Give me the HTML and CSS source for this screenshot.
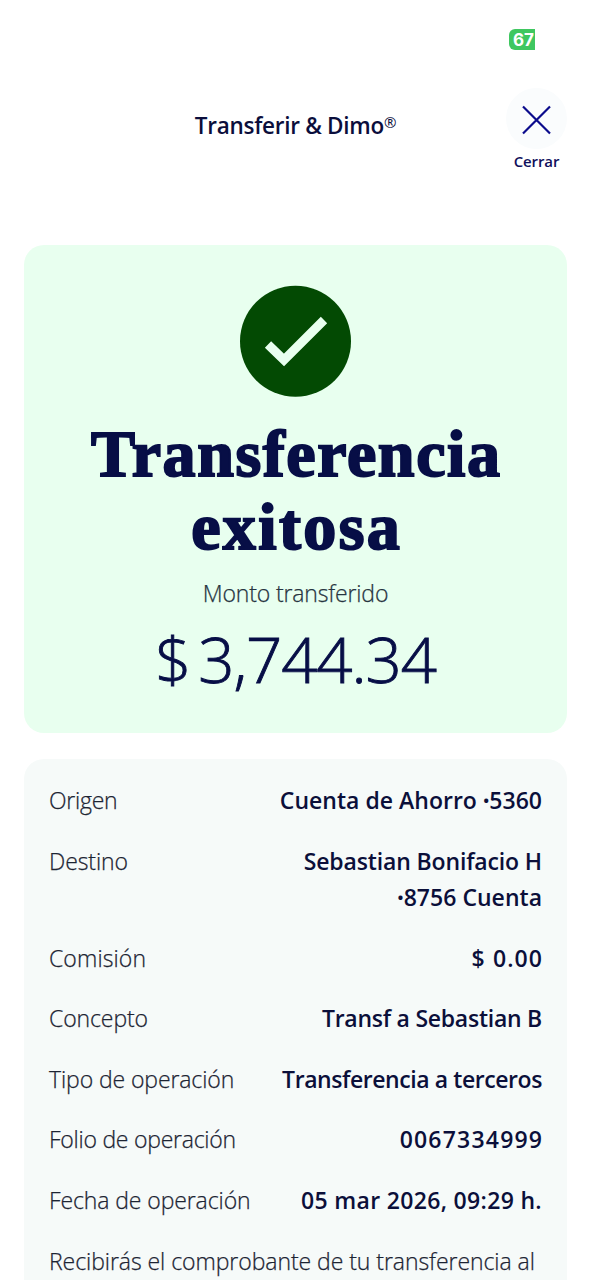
FILE: index.html
```html
<!DOCTYPE html>
<html lang="es">
<head>
<meta charset="utf-8">
<title>Transferir &amp; Dimo</title>
<link rel="stylesheet" href="styles.css">
</head>
<body>
<div class="screen">
  <div class="status"><span class="battery">67</span></div>
  <header class="header">
    <h1 class="header-title">Transferir &amp; Dimo<span class="reg">®</span></h1>
    <div class="close">
      <span class="close-circle"><svg width="30" height="30" viewBox="0 0 30 30"><path d="M1 1.5 28 28.5M28 1.5 1 28.5" fill="none" stroke="#0b0b8c" stroke-width="2.2"/></svg></span>
      <span class="close-label">Cerrar</span>
    </div>
  </header>
  <section class="summary">
    <svg class="check" width="112" height="112" viewBox="0 0 112 112"><circle cx="55.5" cy="56.2" r="55.5" fill="#034a03"/><path d="M28 59.5 44 75 84 35" fill="none" stroke="#e8ffef" stroke-width="9"/></svg>
    <h2 class="result"><span class="result-a">Transferencia</span><span class="result-b">exitosa</span></h2>
    <p class="caption">Monto transferido</p>
    <p class="amount"><span class="currency">$</span>3,744.34</p>
  </section>
  <section class="details">
    <div class="row"><span class="k k1">Origen</span><span class="v v1">Cuenta de Ahorro <span class="dot">•</span>5360</span></div>
    <div class="row"><span class="k k2">Destino</span><span class="v"><span class="v2">Sebastian Bonifacio H</span><br><span class="v3"><span class="dot">•</span>8756 Cuenta</span></span></div>
    <div class="row"><span class="k k3">Comisión</span><span class="v v4">$ 0.00</span></div>
    <div class="row"><span class="k k4">Concepto</span><span class="v v5">Transf a Sebastian B</span></div>
    <div class="row"><span class="k k5">Tipo de operación</span><span class="v v6">Transferencia a terceros</span></div>
    <div class="row"><span class="k k6">Folio de operación</span><span class="v v7">0067334999</span></div>
    <div class="row"><span class="k k7">Fecha de operación</span><span class="v v8">05 mar 2026, 09:29 h.</span></div>
    <p class="k note">Recibirás el comprobante de tu transferencia al</p>
  </section>
</div>
</body>
</html>
```
FILE: styles.css
```css
* { box-sizing: border-box; }
body { margin: 0; background: #fff; color: #070e46; font-family: "Open Sans", "Noto Sans", sans-serif; }
h1, h2, p { margin: 0; }
svg { display: block; }
.screen { width: 591px; height: 1280px; overflow: hidden; display: flex; flex-direction: column; }
.status { height: 88px; padding: 29px 56px 0 0; display: flex; justify-content: flex-end; align-items: flex-start; }
.battery { width: 26px; height: 21px; padding-left: 4px; border-radius: 6px 0 0 6px; background: #3fc760; color: #fff; font: 700 17px/22px Inter, sans-serif; overflow: hidden; white-space: nowrap; }
.header { height: 157px; padding-right: 24px; display: grid; grid-template-columns: 85px 1fr 61px; }
.header-title { grid-column: 2; margin-top: 22px; text-align: center; font-size: 22.5px; line-height: 32px; font-weight: 600; letter-spacing: -0.28px; color: #0b0e3c; white-space: nowrap; }
.reg { font-size: 15px; vertical-align: 6px; line-height: 1; font-weight: 500; }
.close { display: flex; flex-direction: column; align-items: center; }
.close-circle { width: 61px; height: 61px; border-radius: 50%; background: #fafcfd; display: grid; place-items: center; padding-top: 3px; }
.close-label { margin-top: 1px; font-size: 15px; line-height: 22px; font-weight: 600; letter-spacing: -0.1px; color: #10105c; }
.summary { height: 488px; margin: 0 24px; padding-top: 40px; border-radius: 20px; background: #e8ffef; display: flex; flex-direction: column; align-items: center; }
.result { margin-top: 20px; font: 700 66px/73px "Liberation Serif", serif; color: #070e46; -webkit-text-stroke: 2px #070e46; display: flex; flex-direction: column; align-items: center; }
.result-a { letter-spacing: 1.6px; margin-right: -1.6px; }
.result-b { letter-spacing: 2.4px; margin-right: -2.4px; }
.caption { margin-top: 14px; font-size: 23px; line-height: 32px; font-weight: 300; letter-spacing: -0.15px; color: #26343f; -webkit-text-stroke: 0.25px #26343f; white-space: nowrap; }
.amount { margin-top: 10px; font-size: 63.5px; line-height: 80px; font-weight: 300; letter-spacing: -1.1px; -webkit-text-stroke: 0.9px #070e46; white-space: nowrap; }
.currency { margin-right: 8px; }
.details { flex: 1; min-height: 0; margin: 26px 24px 0; padding: 23px 25px 0; border-radius: 20px 20px 0 0; background: #f6faf9; display: flex; flex-direction: column; gap: 24.1px; }
.row { display: flex; justify-content: space-between; }
.k, .v { font-size: 23px; line-height: 36.5px; white-space: nowrap; }
.k { font-weight: 300; letter-spacing: -0.1px; color: #1c2433; -webkit-text-stroke: 0.25px #1c2433; }
.k1, .k6 { letter-spacing: -0.25px; }
.k3 { letter-spacing: 0.1px; }
.note { letter-spacing: -0.06px; }
.v { font-weight: 600; color: #0b0f3a; text-align: right; }
.dot { font-size: 17px; line-height: 1; vertical-align: 2px; }
.v1, .v3 { letter-spacing: 0.02px; }
.v2 { letter-spacing: -0.14px; }
.v4 { letter-spacing: 1.1px; margin-right: -1.1px; }
.v5 { letter-spacing: -0.25px; }
.v6 { letter-spacing: -0.42px; }
.v7 { letter-spacing: 1.2px; margin-right: -1.2px; }
.v8 { letter-spacing: 0.33px; }
```
